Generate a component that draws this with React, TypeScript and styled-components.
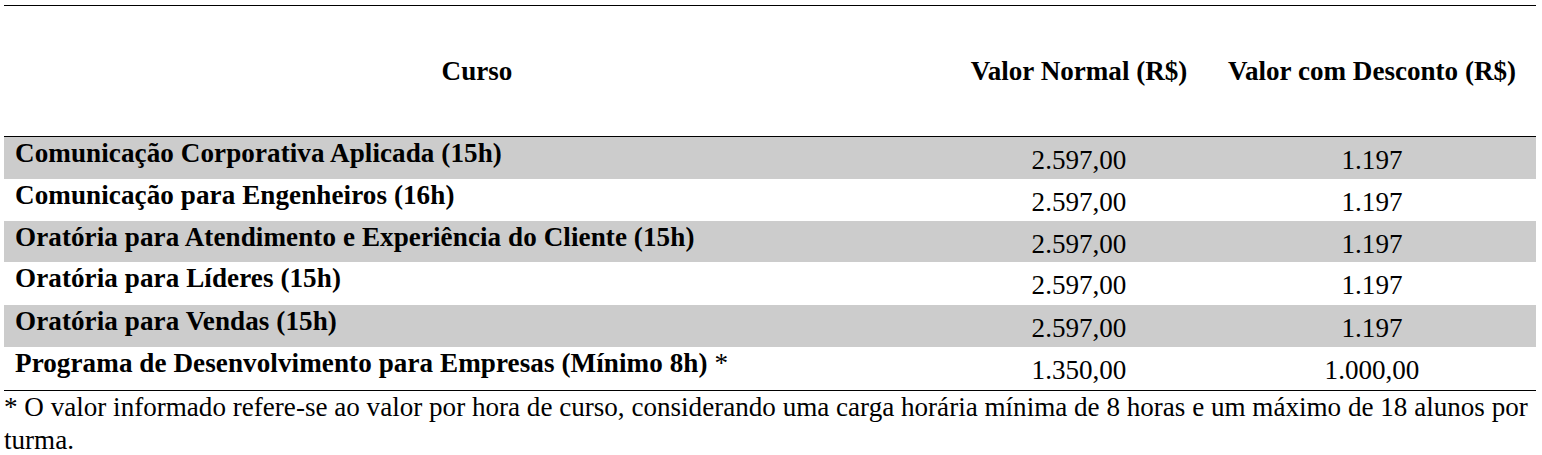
import React from "react";
import styled, { createGlobalStyle } from "styled-components";

const Global = createGlobalStyle`
  html, body { margin: 0; padding: 0; background: #ffffff; }
  body { font-family: "Liberation Serif", "Times New Roman", serif; color: #000; }
`;

const Page = styled.div`
  padding: 5px 6px 0 4px;
  width: 1532px;
`;

const Table = styled.div`
  display: grid;
  grid-template-columns: 946px 258px 328px;
  border-top: 1px solid #000;
  font-size: 27.1px;
  line-height: normal;
`;

const HeadCell = styled.div`
  height: 130px;
  display: flex;
  align-items: center;
  justify-content: center;
  font-weight: bold;
  border-bottom: 1px solid #000;
  white-space: nowrap;
`;

const NameCell = styled.div<{ $shaded: boolean; $h: number }>`
  height: ${(p) => p.$h}px;
  box-sizing: border-box;
  padding: 1px 12px 0 11px;
  background: ${(p) => (p.$shaded ? "#cccccc" : "transparent")};
  font-weight: bold;
  white-space: nowrap;
  line-height: 30px;
  letter-spacing: 0.08px;
`;

const Light = styled.span`
  font-weight: normal;
`;

const ValueCell = styled.div<{ $shaded: boolean; $h: number }>`
  height: ${(p) => p.$h}px;
  box-sizing: border-box;
  padding-top: 8px;
  text-align: center;
  background: ${(p) => (p.$shaded ? "#cccccc" : "transparent")};
  line-height: 30px;
  white-space: nowrap;
`;

const Note = styled.p`
  margin: 0;
  border-top: 1px solid #000;
  font-size: 27.1px;
  line-height: 33px;
`;

type Row = { name: string; star?: boolean; normal: string; discount: string; h: number };

const rows: Row[] = [
  { name: "Comunicação Corporativa Aplicada (15h)", normal: "2.597,00", discount: "1.197", h: 42 },
  { name: "Comunicação para Engenheiros (16h)", normal: "2.597,00", discount: "1.197", h: 42 },
  { name: "Oratória para Atendimento e Experiência do Cliente (15h)", normal: "2.597,00", discount: "1.197", h: 41 },
  { name: "Oratória para Líderes (15h)", normal: "2.597,00", discount: "1.197", h: 43 },
  { name: "Oratória para Vendas (15h)", normal: "2.597,00", discount: "1.197", h: 42 },
  { name: "Programa de Desenvolvimento para Empresas (Mínimo 8h)", star: true, normal: "1.350,00", discount: "1.000,00", h: 43 },
];

export default function App() {
  return (
    <Page>
      <Global />
      <Table>
        <HeadCell>Curso</HeadCell>
        <HeadCell>Valor Normal (R$)</HeadCell>
        <HeadCell>Valor com Desconto (R$)</HeadCell>
        {rows.map((r, i) => {
          const shaded = i % 2 === 0;
          return (
            <React.Fragment key={r.name}>
              <NameCell $shaded={shaded} $h={r.h}>
                {r.name}
                {r.star && <Light> *</Light>}
              </NameCell>
              <ValueCell $shaded={shaded} $h={r.h}>{r.normal}</ValueCell>
              <ValueCell $shaded={shaded} $h={r.h}>{r.discount}</ValueCell>
            </React.Fragment>
          );
        })}
      </Table>
      <Note>
        * O valor informado refere-se ao valor por hora de curso, considerando uma carga horária mínima de 8 horas e um máximo de 18 alunos por turma.
      </Note>
    </Page>
  );
}
